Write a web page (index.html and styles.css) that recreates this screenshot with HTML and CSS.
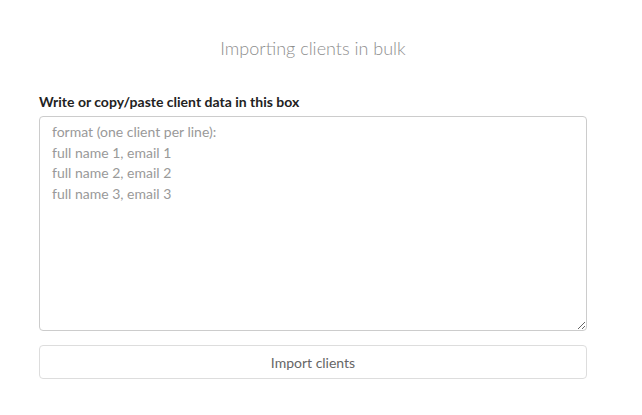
FILE: index.html
```html
<!DOCTYPE html>
<html>
<head>
<meta charset="utf-8">
<link rel="stylesheet" href="styles.css">
</head>
<body>
<div class="wrap">
  <h1 class="title">Importing clients in bulk</h1>
  <label class="label" for="data">Write or copy/paste client data in this box</label>
  <textarea id="data" class="box" placeholder="format (one client per line):
full name 1, email 1
full name 2, email 2
full name 3, email 3"></textarea>
  <button class="btn">Import clients</button>
</div>
</body>
</html>
```
FILE: styles.css
```css
html, body { margin: 0; padding: 0; background: #fff; }
body { font-family: Lato, "Open Sans", sans-serif; }
.wrap {
  width: 548px;
  margin-left: 39px;
  display: flex;
  flex-direction: column;
}
.title {
  margin: 36px 0 0;
  text-align: center;
  font-weight: 300;
  font-size: 18px;
  line-height: 24px;
  color: #8e8e8e;
}
.label {
  margin-top: 33px;
  font-weight: 700;
  font-size: 14px;
  line-height: 18px;
  color: #222;
}
.box {
  margin-top: 5px;
  box-sizing: border-box;
  width: 548px;
  height: 215px;
  padding: 5px 12px;
  border: 1px solid #ccc;
  border-radius: 4px;
  font-family: Lato, sans-serif;
  font-size: 14px;
  line-height: 20.5px;
  color: #555;
  resize: vertical;
  outline: none;
}
.box::placeholder { color: #999; }
.btn {
  margin-top: 14px;
  box-sizing: border-box;
  width: 548px;
  height: 34px;
  border: 1px solid #ddd;
  border-radius: 4px;
  background: #fff;
  font-family: Lato, sans-serif;
  font-size: 14px;
  color: #666;
}
```
